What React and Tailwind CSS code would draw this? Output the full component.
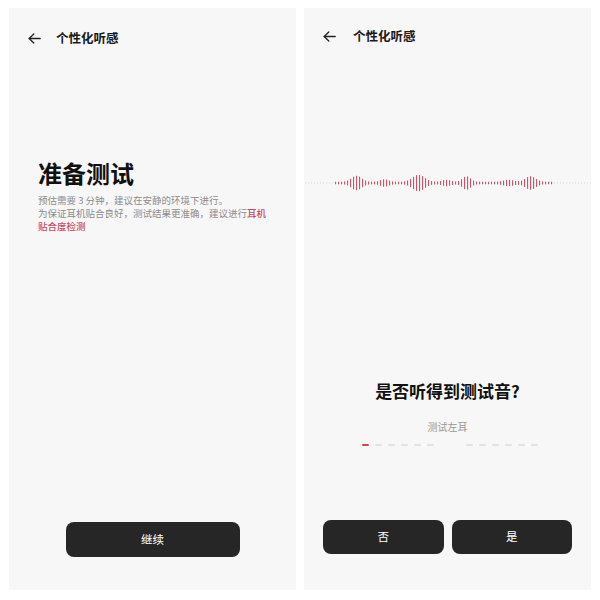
import React from "react";

const FONT = {fontFamily: '"Noto Sans CJK SC", "Noto Sans", sans-serif'};

function BackArrow() {
  return (
    <svg width="13" height="11" viewBox="0 0 13 11" fill="none" stroke="#222" strokeWidth="1.3" strokeLinecap="round" strokeLinejoin="round">
      <path d="M1.2 5.5H12.2" />
      <path d="M5.8 1L1.2 5.5L5.8 10" />
    </svg>
  );
}

function Header({gap}) {
  return (
    <div className="flex items-center h-[16px] pl-[19px]">
      <BackArrow />
      <span className={`${gap} text-[12.5px] font-semibold text-[#1a1a1a] leading-none`}>个性化听感</span>
    </div>
  );
}

// peaks of the wave envelope, in panel coordinates: [x, amplitude, sigma]
const PEAKS = [[52, 12, 5], [80, 5, 4], [114, 14, 6], [142, 4, 4], [162, 11, 4], [204, 4, 5], [226, 11, 5]];

function Waveform() {
  const bars = [];
  for (let x = 1; x < 287; x += 3) {
    const inside = x >= 29 && x <= 249;
    let h = 1.5;
    if (inside) {
      h = 2.5;
      PEAKS.forEach(([px, a, s]) => {
        h += a * Math.exp(-((x - px) ** 2) / (2 * s * s));
      });
    }
    bars.push(
      <rect key={x} x={x} y={10 - h / 2} width="1.1" height={h} fill={inside ? "#cf5468" : "#e4e4e4"} />
    );
  }
  return (
    <svg width="287" height="20" viewBox="0 0 287 20">
      {bars}
    </svg>
  );
}

function DarkButton({children, className}) {
  return (
    <button className={`h-[34px] rounded-[8px] bg-[#262626] text-white text-[11.5px] flex items-center justify-center ${className}`}>
      {children}
    </button>
  );
}

export default function App() {
  const slots = Array.from({length: 14}, (_, i) => i);

  return (
    <div className="w-[600px] h-[600px] bg-white flex gap-[8px] pl-[9px] pt-[8px]" style={FONT}>
      {/* left panel: preparation */}
      <div className="w-[287px] h-[582px] bg-[#f7f7f7] flex flex-col">
        <div className="mt-[22px]">
          <Header gap="ml-[15px]" />
        </div>
        <div className="pl-[29px] mt-[115px]">
          <h1 className="text-[24px] leading-[24px] font-bold text-[#111]">准备测试</h1>
          <div className="mt-[9px] w-[234px] text-[9.5px] leading-[13px] text-[#8c8c8c]">
            <p>预估需要 3 分钟，建议在安静的环境下进行。</p>
            <p>
              为保证耳机贴合良好，测试结果更准确，建议进行<span className="text-[#c94a5f] font-medium">耳机贴合度检测</span>
            </p>
          </div>
        </div>
        <div className="flex-1" />
        <DarkButton className="w-[174px] h-[35px] mx-auto mb-[33px]">继续</DarkButton>
      </div>

      {/* right panel: listening test */}
      <div className="w-[287px] h-[582px] bg-[#f7f7f7] flex flex-col">
        <div className="mt-[20px]">
          <Header gap="ml-[17px]" />
        </div>
        <div className="mt-[129px]">
          <Waveform />
        </div>
        <h2 className="mt-[186px] text-center text-[17px] leading-[24px] font-bold text-[#111]">是否听得到测试音?</h2>
        <p className="mt-[17px] text-center text-[10px] leading-[14px] text-[#999]">测试左耳</p>
        <div className="mt-[10px] flex gap-[6px] pl-[58px]">
          {slots.map((i) => (
            <div
              key={i}
              className={`w-[7px] h-[2px] rounded-full ${i === 0 ? "bg-[#c94a5f]" : i === 6 || i === 7 ? "bg-transparent" : "bg-[#e3e3e3]"}`}
            />
          ))}
        </div>
        <div className="flex-1" />
        <div className="flex gap-[8px] px-[19px] mb-[36px]">
          <DarkButton className="flex-1">否</DarkButton>
          <DarkButton className="flex-1">是</DarkButton>
        </div>
      </div>
    </div>
  );
}
